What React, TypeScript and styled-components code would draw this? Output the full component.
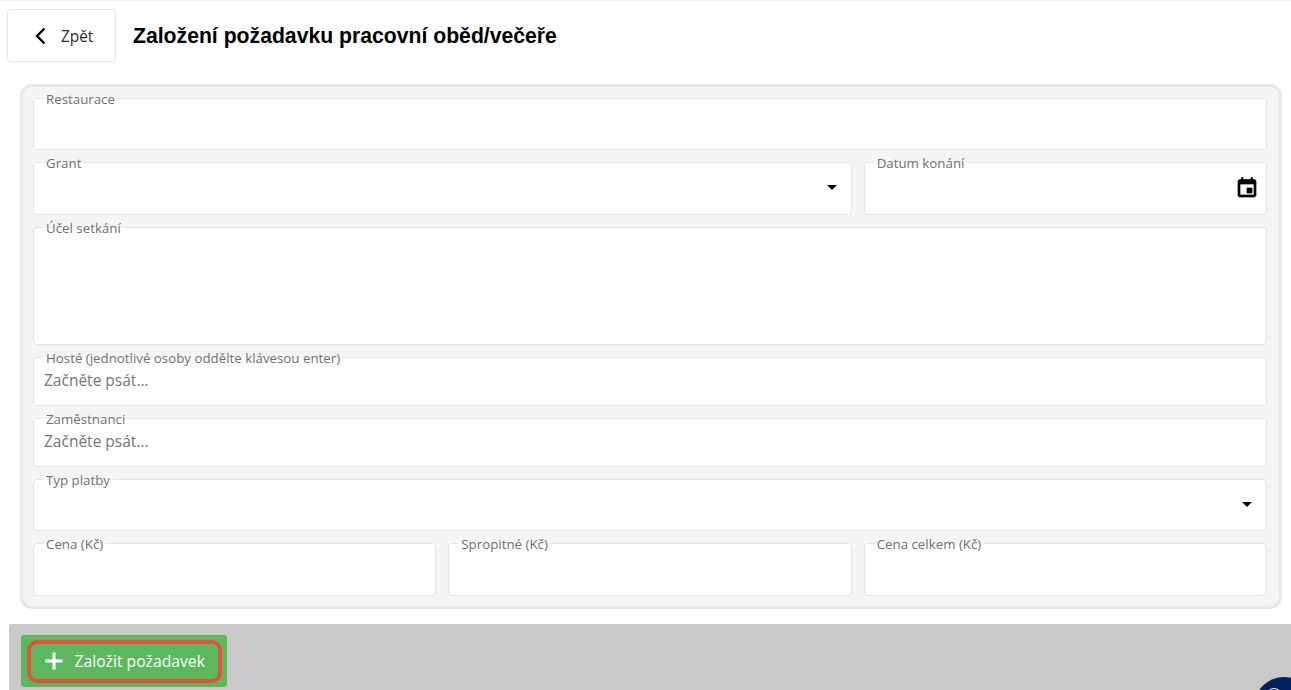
import React from "react";
import styled, { createGlobalStyle } from "styled-components";

const Global = createGlobalStyle`
  html, body { margin: 0; padding: 0; background: #fff; height: 100%; overflow: hidden; }
  #root { height: 100%; }
  * { box-sizing: border-box; }
`;

const Page = styled.div`
  position: relative;
  width: 1291px;
  height: 690px;
  overflow: hidden;
  border-top: 1px solid #eeeeee;
  font-family: "Open Sans", "Liberation Sans", sans-serif;
  display: flex;
  flex-direction: column;
`;

const Header = styled.header`
  display: flex;
  align-items: center;
  flex: none;
  height: 52px;
  margin: 8px 0 0 7px;
  gap: 17px;
`;

const BackButton = styled.button`
  width: 109px;
  height: 53px;
  display: flex;
  align-items: center;
  padding: 2px 0 0 25px;
  gap: 12px;
  background: #fff;
  border: 1px solid #e6e6e6;
  border-radius: 4px;
  font: 400 15.4px "Open Sans", sans-serif;
  color: #2b2b2b;
`;

const Title = styled.h1`
  margin: 2px 0 0;
  font: 700 21.2px "Liberation Sans", Arial, sans-serif;
  color: #000;
`;

const Card = styled.form`
  flex: none;
  margin: 23px 9px 0 20px;
  height: 525px;
  padding: 11px 12px 0 10px;
  background: #f5f5f5;
  border: 3px solid #e8e8e8;
  border-radius: 12px;
  display: flex;
  flex-direction: column;
  gap: 12px;
`;

const Row = styled.div`
  display: grid;
  grid-template-columns: repeat(3, 1fr);
  gap: 12px;
`;

const Field = styled.div<{ $h: number; $span?: number }>`
  position: relative;
  padding: 12.5px 10px 0;
  min-width: 0;
  height: ${(p) => p.$h}px;
  grid-column: span ${(p) => p.$span ?? 1};
  background: #fff;
  border: 1px solid #e4e4e4;
  border-radius: 4px;
`;

const Label = styled.label`
  position: absolute;
  left: 9px;
  top: -8px;
  padding: 0 3px;
  font-size: 13.3px;
  line-height: 16px;
  white-space: nowrap;
  color: #6f6f6f;
  background: linear-gradient(#f5f5f5 50%, #fff 50%);
`;

const Placeholder = styled.div`
  font-size: 15.5px;
  line-height: 21px;
  color: #757575;
`;

const Caret = styled.span`
  position: absolute;
  right: 14px;
  top: 22px;
  width: 0;
  height: 0;
  border-left: 5px solid transparent;
  border-right: 5px solid transparent;
  border-top: 5px solid #000;
`;

const CalendarIcon = styled.svg`
  position: absolute;
  right: 7px;
  top: 13px;
  width: 24px;
  height: 24px;
`;

const Footer = styled.div`
  flex: none;
  height: 66px;
  margin: 15px 0 0 9px;
  background: #c9c9c9;
  padding: 11px 12px;
  border-radius: 2px 0 0 0;
`;

const CreateButton = styled.button`
  width: 206px;
  height: 52px;
  padding: 0;
  background: #5cb85c;
  border: none;
  border-radius: 3px;
  display: flex;
  align-items: center;
  justify-content: center;
`;

const CreateInner = styled.span`
  width: 195px;
  height: 43px;
  display: flex;
  align-items: center;
  gap: 12px;
  padding-left: 14px;
  border: 4px solid #e4503c;
  border-radius: 10px;
  color: #fff;
  font-size: 15.7px;
  font-family: "Open Sans", sans-serif;
`;

const Bubble = styled.div`
  position: absolute;
  left: 1254px;
  top: 676px;
  width: 60px;
  height: 60px;
  border-radius: 50%;
  background: #01215f;
`;

const BubbleRing = styled.div`
  position: absolute;
  left: 12px;
  top: 11px;
  width: 16px;
  height: 16px;
  border-radius: 50%;
  border: 1.5px solid #fff;
`;

export default function App() {
  return (
    <Page>
      <Global />
      <Header>
        <BackButton type="button">
          <svg width="16" height="18" viewBox="0 0 16 18" fill="none" stroke="#000" strokeWidth="2.4">
            <path d="M11.5 1.500 L4 9 L11.500 16.500" />
          </svg>
          Zpět
        </BackButton>
        <Title>Založení požadavku pracovní oběd/večeře</Title>
      </Header>
      <Card>
        <Field $h={52}><Label>Restaurace</Label></Field>
        <Row>
          <Field $h={52.5} $span={2}><Label>Grant</Label><Caret /></Field>
          <Field $h={52.5}>
            <Label>Datum konání</Label>
            <CalendarIcon viewBox="0 0 24 24" fill="#000" stroke="#000" strokeWidth="0.7">
              <path d="M17 12h-5v5h5v-5zM16 1.500v2H8v-2H6.500v2H5c-1.110 0-1.990.900-1.990 2L3 19c0 1.100.890 2 2 2h14c1.100 0 2-.900 2-2V5.500c0-1.100-.900-2-2-2h-1.500v-2H16zm3 17.500H5V8h14v11z" />
            </CalendarIcon>
          </Field>
        </Row>
        <Field $h={118}><Label>Účel setkání</Label></Field>
        <Field $h={49}>
          <Label>Hosté (jednotlivé osoby oddělte klávesou enter)</Label>
          <Placeholder>Začněte psát...</Placeholder>
        </Field>
        <Field $h={49}>
          <Label>Zaměstnanci</Label>
          <Placeholder>Začněte psát...</Placeholder>
        </Field>
        <Field $h={52.5}><Label>Typ platby</Label><Caret /></Field>
        <Row>
          <Field $h={52.5}><Label>Cena (Kč)</Label></Field>
          <Field $h={52.5}><Label>Spropitné (Kč)</Label></Field>
          <Field $h={52.5}><Label>Cena celkem (Kč)</Label></Field>
        </Row>
      </Card>
      <Footer>
        <CreateButton type="button">
          <CreateInner>
            <svg width="18" height="18" viewBox="0 0 18 18" stroke="#fff" strokeWidth="3">
              <path d="M9 0.500V17.500M0.500 9H17.500" />
            </svg>
            Založit požadavek
          </CreateInner>
        </CreateButton>
      </Footer>
      <Bubble><BubbleRing /></Bubble>
    </Page>
  );
}
